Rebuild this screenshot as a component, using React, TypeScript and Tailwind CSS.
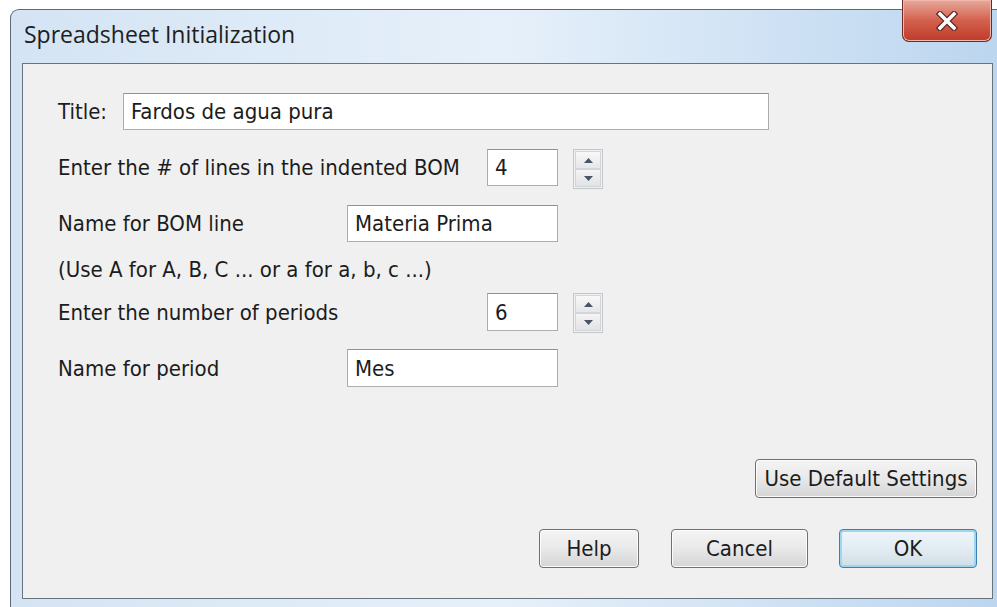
import React from "react";

const TextBox = ({ value, className }: { value: string; className: string }) => (
  <div
    className={`flex h-[37px] items-center border border-[#abadb3] border-t-[#8e9297] bg-white pl-[7px] text-[#1c1c1c] ${className}`}
  >
    {value}
  </div>
);

const SpinArrow = ({ up }: { up?: boolean }) => (
  <svg width="9" height="5" viewBox="0 0 9 5">
    <path d={up ? "M0 5 L4.5 0 L9 5Z" : "M0 0 L4.5 5 L9 0Z"} fill="#4a5465" />
  </svg>
);

const Spinner = () => (
  <div className="ml-[15px] flex h-[40px] w-[30px] flex-col border border-[#c4c8cd] bg-[#eef0f2] p-px">
    <div className="flex flex-1 items-center justify-center border border-[#d2d5d9] bg-gradient-to-b from-[#f8f8f8] to-[#e6e7e9]">
      <SpinArrow up />
    </div>
    <div className="flex flex-1 items-center justify-center border border-[#d2d5d9] bg-gradient-to-b from-[#f4f4f4] to-[#e2e3e5]">
      <SpinArrow />
    </div>
  </div>
);

const Button = ({
  label,
  className,
  primary,
}: {
  label: string;
  className: string;
  primary?: boolean;
}) => (
  <button
    type="button"
    className={`flex h-[39px] items-center justify-center rounded-[4px] border text-[#1c1c1c] ${
      primary
        ? "border-[#3c7fb1] shadow-[inset_0_0_0_2px_#9fd6ee] bg-gradient-to-b from-[#eef6fb] via-[#e3ecf2] to-[#cfdde6]"
        : "border-[#707070] shadow-[inset_0_0_0_1px_#fbfbfb] bg-gradient-to-b from-[#f4f4f4] via-[#e9e9e9] to-[#d4d4d4]"
    } ${className}`}
  >
    {label}
  </button>
);

export default function App() {
  return (
    <div className="relative h-[607px] w-[997px] overflow-hidden bg-white font-['DejaVu_Sans_Condensed','DejaVu_Sans',sans-serif] text-[22px] text-[#1c1c1c]">
      <div className="ml-[10px] mt-[9px] flex h-[598px] w-[987px] flex-col rounded-tl-[9px] border-l border-t border-[#5d6975] bg-gradient-to-r from-[#d4e4f4] via-[#e6f0fa] to-[#bcd6ef]">
        {/* caption */}
        <div className="flex h-[53px] items-center pl-[13px] pb-[4px] font-['Open_Sans',sans-serif] text-[23px] text-[#1e1e1e]">
          Spreadsheet Initialization
        </div>

        {/* client area */}
        <div className="ml-[11px] mr-[4px] flex flex-1 flex-col border border-[#69737d] bg-[#f0f0f0] pl-[35px] pr-[15px] pb-[30px]">
          <div className="mt-[29px] flex items-center">
            <span className="w-[65px]">Title:</span>
            <TextBox value="Fardos de agua pura" className="w-[646px]" />
          </div>

          <div className="mt-[19px] flex h-[40px] items-start">
            <span className="flex h-[37px] w-[429px] items-center">Enter the # of lines in the indented BOM</span>
            <TextBox value="4" className="w-[71px]" />
            <Spinner />
          </div>

          <div className="mt-[16px] flex items-center">
            <span className="w-[289px]">Name for BOM line</span>
            <TextBox value="Materia Prima" className="w-[211px]" />
          </div>

          <div className="mt-[16px] flex h-[22px] items-center">
            (Use A for A, B, C ... or a for a, b, c ...)
          </div>

          <div className="mt-[13px] flex h-[40px] items-start">
            <span className="flex h-[38px] w-[429px] items-center">Enter the number of periods</span>
            <TextBox value="6" className="h-[38px] w-[71px]" />
            <Spinner />
          </div>

          <div className="mt-[16px] flex items-center">
            <span className="w-[289px]">Name for period</span>
            <TextBox value="Mes" className="h-[38px] w-[211px]" />
          </div>

          <div className="mt-auto flex flex-col items-end">
            <Button label="Use Default Settings" className="w-[222px]" />
            <div className="mt-[31px] flex">
              <Button label="Help" className="w-[100px]" />
              <Button label="Cancel" className="ml-[32px] w-[137px]" />
              <Button label="OK" primary className="ml-[31px] w-[138px]" />
            </div>
          </div>
        </div>

        <div className="h-[8px]" />
      </div>

      {/* close button */}
      <div className="absolute left-[902px] top-0 flex h-[42px] w-[90px] items-center justify-center rounded-b-[7px] border border-t-0 border-[#6a2b24] bg-gradient-to-b from-[#e7a99c] via-[#d2604d] to-[#c0392a] shadow-[inset_0_0_0_1px_#f0b8ac]">
        <svg width="22" height="20" viewBox="0 0 22 20">
          <path
            d="M4 3 L18 17 M18 3 L4 17"
            stroke="#5a2a26"
            strokeWidth="6"
            strokeLinecap="square"
          />
          <path
            d="M4 3 L18 17 M18 3 L4 17"
            stroke="#ffffff"
            strokeWidth="3.5"
            strokeLinecap="square"
          />
        </svg>
      </div>
    </div>
  );
}
